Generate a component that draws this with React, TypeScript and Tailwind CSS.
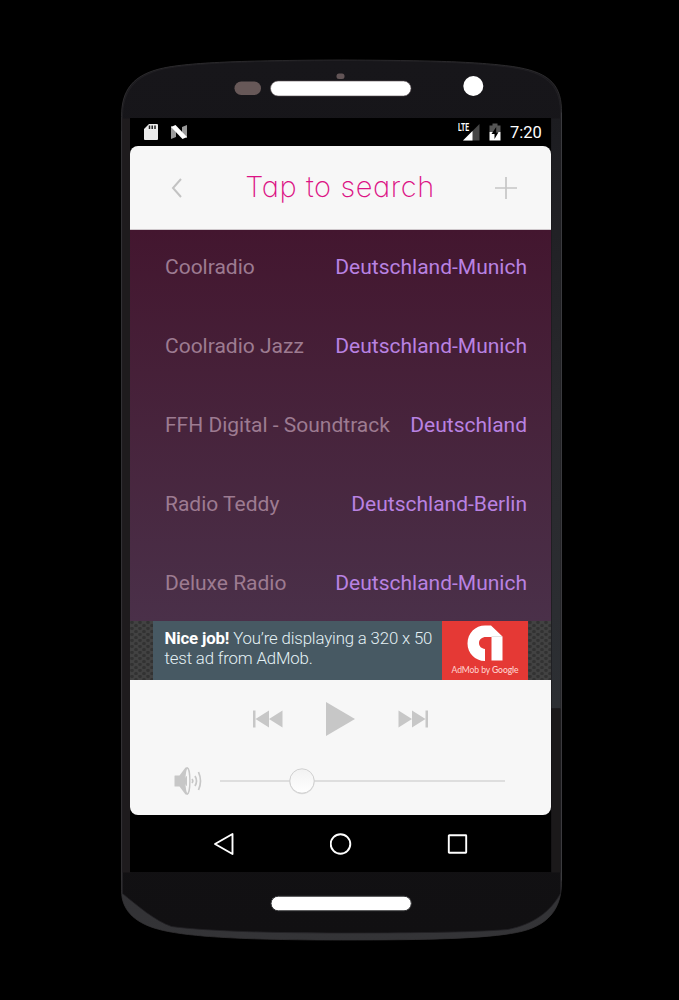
const stations = [
  { name: "Coolradio", place: "Deutschland-Munich" },
  { name: "Coolradio Jazz", place: "Deutschland-Munich" },
  { name: "FFH Digital - Soundtrack", place: "Deutschland" },
  { name: "Radio Teddy", place: "Deutschland-Berlin" },
  { name: "Deluxe Radio", place: "Deutschland-Munich" },
];

function PhoneBody() {
  return (
    <svg className="absolute inset-0" width="441" height="882" viewBox="120.5 58.5 441 882" aria-hidden="true">
      <defs>
        <linearGradient id="rim" x1="0" y1="0" x2="0" y2="1">
          <stop offset="0" stopColor="#1b1a1e" />
          <stop offset="0.5" stopColor="#252326" />
          <stop offset="1" stopColor="#343437" />
        </linearGradient>
        <linearGradient id="face" x1="0" y1="0" x2="0" y2="1">
          <stop offset="0" stopColor="#17161a" />
          <stop offset="1" stopColor="#111012" />
        </linearGradient>
        <linearGradient id="side" x1="0" y1="0" x2="0" y2="1">
          <stop offset="0" stopColor="#1c1c20" />
          <stop offset="0.5" stopColor="#29292d" />
          <stop offset="1" stopColor="#2c2f33" />
        </linearGradient>
      </defs>
      <path
        d="M121 116C121 90 132 74 163 67.500C190 62 240 60 341 59.500C430 60 475 61 512 66C546 71 560 82 561 108V882C561 908 548 926 516 932C485 938 430 939.500 341 939.500C240 939.500 190 936 163 930C136 924 121 911 121 890Z"
        fill="url(#rim)"
        stroke="#343235"
        strokeWidth="0.800"
      />
      <path
        d="M122 117C122 91 134 75 163 68.500C190 63 240 60.500 341 60C430 60.500 475 62 511 67C545 72 559 84 560 110V893C550 911 533 924 507 929C472 932 400 932.500 341 932.500C260 932.500 200 930 171 926C154 920 138 906 122 893Z"
        fill="url(#face)"
        stroke="#222124"
        strokeWidth="0.800"
      />
      <path d="M551 118H560V708H551Z" fill="url(#side)" />
      <path d="M122 118H130V872H122Z" fill="#1e1b1d" />
      <path d="M551 708H560V872H551Z" fill="#1b191a" />
      <path d="M561.200 112V880" stroke="#434347" strokeWidth="0.800" />
      <path d="M120.900 130V880" stroke="#353336" strokeWidth="0.800" />
      <rect x="234" y="81" width="26.500" height="13.500" rx="6.700" fill="#675858" />
      <rect x="336" y="73" width="8" height="5.500" rx="2.500" fill="#625456" />
      <rect x="270" y="80.500" width="140.500" height="15" rx="7.500" fill="#fff" stroke="#5d5356" strokeWidth="0.600" />
      <circle cx="472.800" cy="85.500" r="10" fill="#fff" />
      <rect x="270.500" y="895.700" width="140.300" height="14.600" rx="7.300" fill="#fff" stroke="#343436" strokeWidth="1" />
    </svg>
  );
}

function StatusBar() {
  return (
    <div className="flex h-[28px] shrink-0 items-center bg-black pl-[14px] pr-[8px]">
      <svg width="14" height="16" viewBox="0 0 14 16">
        <path d="M5 0H13Q14 0 14 1V15Q14 16 13 16H1Q0 16 0 15V5Z" fill="#ececec" />
        <path d="M5.500 1.500V5M8.200 1.500V5M11 1.500V5" stroke="#222" strokeWidth="1.500" />
      </svg>
      <svg className="ml-[12px]" width="18" height="14" viewBox="0 0 18 14">
        <path d="M1 1L6 3V12L1 14Z" fill="#9a9a9a" />
        <path d="M12 2L17 0V13L12 11Z" fill="#9a9a9a" />
        <path d="M1 2L5.500 0L17 12L12.500 14Z" fill="#fff" />
      </svg>
      <div className="grow" />
      <svg width="22" height="18" viewBox="0 0 22 18">
        <path d="M21.500 1V17.500H5Z" fill="#464646" />
        <path d="M14.500 8V17.500H5Z" fill="#fff" />
        <text x="0" y="8" fontFamily="Roboto, sans-serif" fontWeight="700" fontSize="10" textLength="11" lengthAdjust="spacingAndGlyphs" fill="#fff">LTE</text>
      </svg>
      <svg className="ml-[9px]" width="12" height="18" viewBox="0 0 12 18">
        <path d="M3.500 0.500H8.500V2.500H11.500V9H0.500V2.500H3.500Z" fill="#555" />
        <path d="M0.500 9H11.500V17.500H0.500Z" fill="#fff" />
        <path d="M7.200 4L2.500 11H5.500V16L9.500 9.300H7.200Z" fill="#000" />
      </svg>
      <span className="ml-[9px] w-[33px] whitespace-nowrap pt-[2px] text-[16.500px] leading-none text-white">7:20</span>
    </div>
  );
}

function Header() {
  return (
    <div className="flex h-[84px] shrink-0 items-center rounded-t-[8px] border-b border-[#cfc8cc] bg-[#f7f7f7] pl-[41px] pr-[34px]">
      <svg width="12" height="20" viewBox="0 0 12 20">
        <path d="M10 1L2 10L10 19" fill="none" stroke="#c3c3c3" strokeWidth="2" />
      </svg>
      <span className="grow whitespace-nowrap pb-[2px] pl-[2px] text-center font-['Inter',sans-serif] text-[29px] font-extralight leading-none tracking-[0.600px] text-[#dc1385] [font-feature-settings:'cv11']">
        Tap to search
      </span>
      <svg width="22" height="22" viewBox="0 0 22 22">
        <path d="M11 0V22M0 11H22" stroke="#c6c6c6" strokeWidth="1.700" />
      </svg>
    </div>
  );
}

function Hexes({ id, className }: { id: string; className: string }) {
  return (
    <svg className={className} width="24" height="59">
      <defs>
        <pattern id={id} width="8" height="6" patternUnits="userSpaceOnUse">
          <rect width="8" height="6" fill="#424242" />
          <circle cx="2" cy="1.500" r="1.800" fill="#323232" />
          <circle cx="6" cy="4.500" r="1.800" fill="#323232" />
        </pattern>
      </defs>
      <rect width="24" height="59" fill={`url(#${id})`} />
    </svg>
  );
}

function Ad() {
  return (
    <div className="flex h-[59px] shrink-0">
      <Hexes id="hexLeft" className="w-[23px] shrink-0" />
      <div className="w-[289px] shrink-0 whitespace-nowrap bg-[#475963] pl-[11.500px] pt-[8px] text-[16.800px] font-light leading-[19.500px] tracking-[-0.150px] text-[#e4f1f5]">
        <b className="font-bold text-white">Nice job!</b> You’re displaying a 320 x 50
        <br />
        test ad from AdMob.
      </div>
      <div className="flex w-[86px] shrink-0 flex-col items-center bg-[#e53935] pt-[4px]">
        <svg width="36" height="36" viewBox="0 0 36 36">
          <path d="M18 36C8 36 0.500 28 0.500 18.500C0.500 8 8.500 0.500 18 0.500H24L35.500 11.500V35.500H24.500V12H19C15 12 12 14.500 12 18C12 21.500 14.500 23.500 18 24Z" fill="#fff" />
          <path d="M24.500 11.500H35" stroke="#ddd" strokeWidth="0.800" />
        </svg>
        <span className="mt-[4px] whitespace-nowrap font-['Lato',sans-serif] text-[8.600px] leading-[10px] tracking-[-0.100px] text-[#ffd5d2]">
          AdMob by <span className="font-medium">Google</span>
        </span>
      </div>
      <Hexes id="hexRight" className="w-[23px] shrink-0" />
    </div>
  );
}

function Player() {
  return (
    <div className="flex h-[135px] shrink-0 flex-col rounded-b-[8px] bg-[#f7f7f7]">
      <div className="flex h-[79px] items-center pb-[1px] pl-[123px]">
        <svg width="30" height="18" viewBox="0 0 30 18">
          <path d="M0 0.500H2.500V17.500H0ZM2.500 9L16 0.500V17.500ZM16 9L29.500 0.500V17.500Z" fill="#c7c7c7" />
        </svg>
        <svg className="ml-[43px]" width="29" height="34" viewBox="0 0 29 34">
          <path d="M0 0L29 17L0 34Z" fill="#c7c7c7" />
        </svg>
        <svg className="ml-[43px]" width="30" height="18" viewBox="0 0 30 18">
          <path d="M27.500 0.500H30V17.500H27.500ZM0.500 0.500L14 9L0.500 17.500ZM14 0.500L27.500 9L14 17.500Z" fill="#c7c7c7" />
        </svg>
      </div>
      <div className="flex h-[44px] items-center pl-[44px]">
        <svg width="28" height="28" viewBox="0 0 28 28">
          <path d="M0.500 9Q0.500 8.500 1 8.500H5.500L11.500 0.500H14V27.500H11.500L5.500 19.500H1Q0.500 19.500 0.500 19Z" fill="#c7c7c7" />
          <ellipse cx="13.300" cy="14" rx="2.600" ry="13" fill="#f7f7f7" stroke="#c7c7c7" strokeWidth="1.400" />
          <path d="M13 9Q10.800 9.500 10.800 14Q10.800 18.500 13 19Z" fill="#c7c7c7" />
          <path d="M18 12Q19.600 14 18 16M21 9Q24 14 21 19M24.500 5Q28.500 14 24.500 23" fill="none" stroke="#c7c7c7" strokeWidth="1.700" />
        </svg>
        <svg className="ml-[18px]" width="285" height="30" viewBox="0 0 285 30">
          <defs>
            <linearGradient id="knob" x1="0" y1="0" x2="0" y2="1">
              <stop offset="0" stopColor="#f2f2f2" />
              <stop offset="1" stopColor="#ffffff" />
            </linearGradient>
          </defs>
          <rect x="0" y="14.200" width="285" height="1.600" fill="#d8d8d8" />
          <circle cx="82" cy="15.600" r="12.600" fill="#dcdcdc" />
          <circle cx="82" cy="15" r="12.200" fill="url(#knob)" stroke="#c8c8c8" strokeWidth="0.800" />
        </svg>
      </div>
    </div>
  );
}

function NavBar() {
  return (
    <div className="flex h-[57px] shrink-0 items-center justify-center gap-[95px] bg-black">
      <svg width="22" height="24" viewBox="0 0 22 24">
        <path d="M19.500 2V22L2 12Z" fill="none" stroke="#fff" strokeWidth="1.900" strokeLinejoin="round" />
      </svg>
      <svg width="22" height="22" viewBox="0 0 22 22">
        <circle cx="10.500" cy="11" r="9.800" fill="none" stroke="#fff" strokeWidth="1.900" />
      </svg>
      <svg width="22" height="22" viewBox="0 0 22 22">
        <rect x="1.800" y="2.300" width="17.400" height="17.400" rx="0.500" fill="none" stroke="#fff" strokeWidth="1.900" />
      </svg>
    </div>
  );
}

export default function App() {
  return (
    <div className="flex h-[1000px] w-[679px] justify-center overflow-hidden bg-black pt-[58.500px] pl-[3px] font-['Roboto',sans-serif]">
      <div className="relative h-[882px] w-[441px] shrink-0">
        <PhoneBody />
        <div className="relative flex h-full flex-col pl-[9.500px] pt-[59.500px]">
          <div className="flex h-[754px] w-[421px] flex-col bg-black">
            <StatusBar />
            <Header />
            <div className="flex h-[391px] shrink-0 flex-col justify-center overflow-hidden bg-linear-to-b from-[#43162f] to-[#4a3049]">
              {stations.map((s) => (
                <div key={s.name} className="flex h-[79px] shrink-0 items-center justify-between whitespace-nowrap pl-[35px] pr-[24px] text-[21px] leading-none">
                  <span className="text-[#9d7b91]">{s.name}</span>
                  <span className="text-[#b982e2]">{s.place}</span>
                </div>
              ))}
            </div>
            <Ad />
            <Player />
            <NavBar />
          </div>
        </div>
      </div>
    </div>
  );
}
